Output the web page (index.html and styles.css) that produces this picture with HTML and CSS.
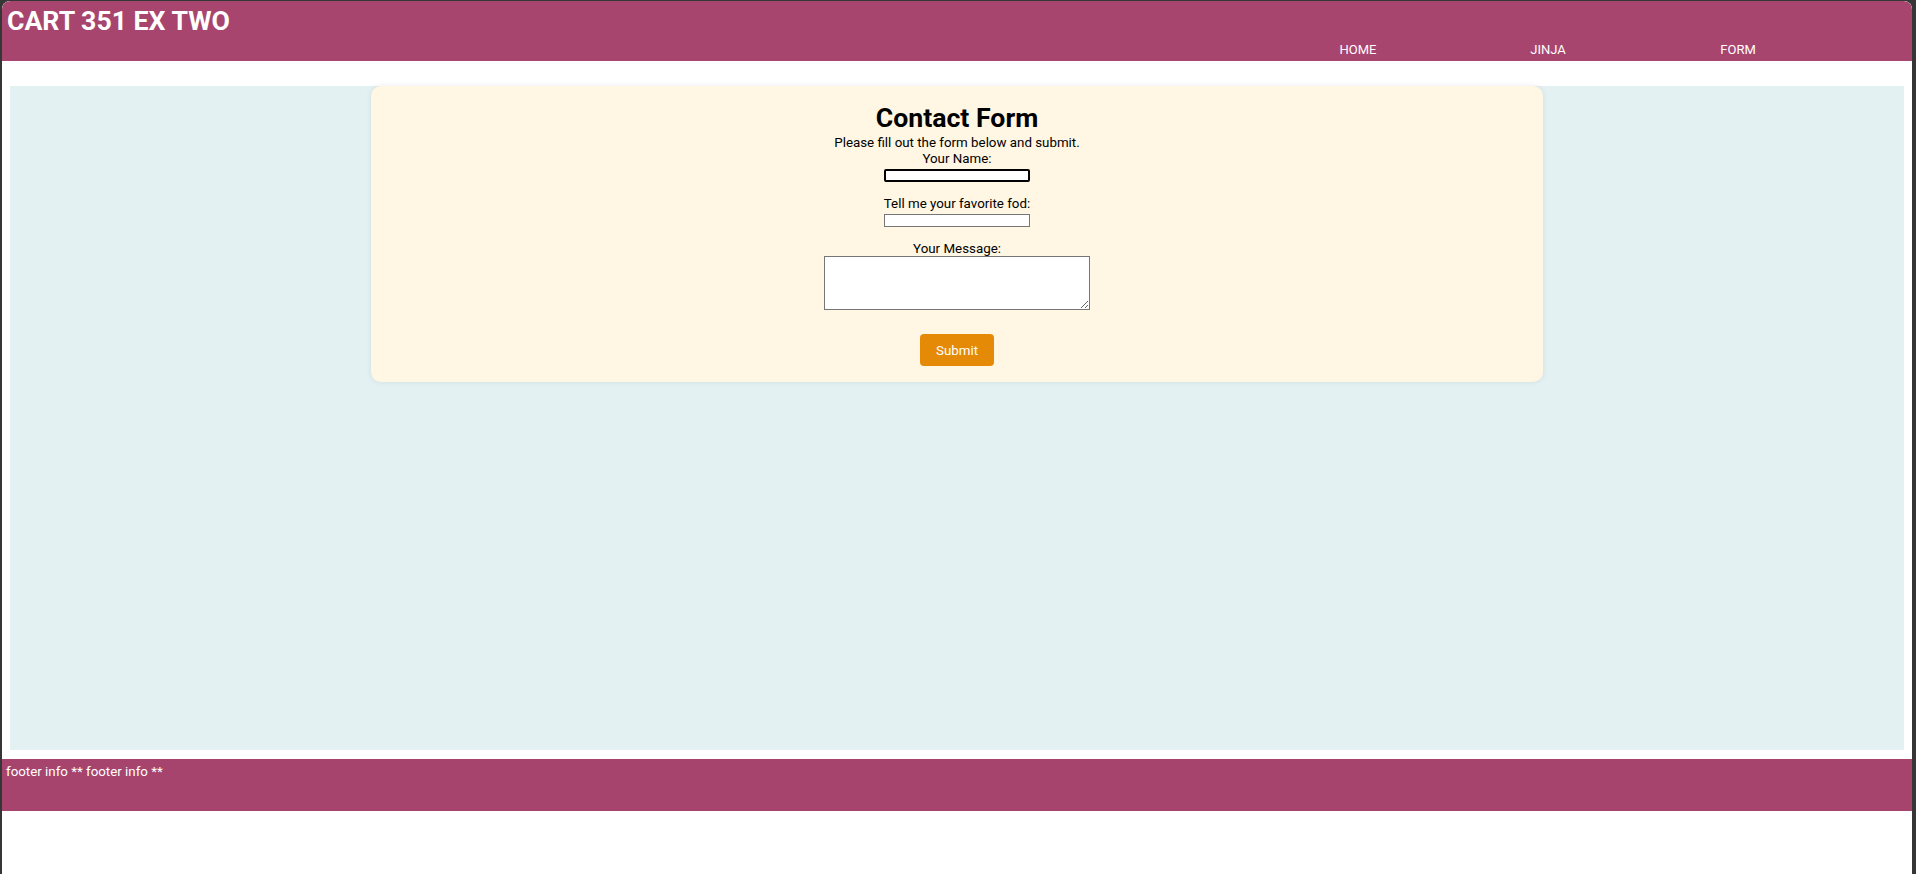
FILE: index.html
```html
<!DOCTYPE html>
<html lang="en">
<head>
<meta charset="utf-8">
<title>CART 351 EX TWO</title>
<link rel="stylesheet" href="styles.css">
</head>
<body>
<div class="window">
  <header class="site-header">
    <h1 class="site-title">CART 351 EX TWO</h1>
    <nav class="site-nav">
      <a class="nav-link" href="#">HOME</a>
      <a class="nav-link" href="#">JINJA</a>
      <a class="nav-link" href="#">FORM</a>
    </nav>
  </header>
  <main class="content">
    <section class="card">
      <h2 class="card-title">Contact Form</h2>
      <p class="card-intro">Please fill out the form below and submit.</p>
      <form class="contact-form">
        <div class="field">
          <label class="field-label" for="name">Your Name:</label>
          <input class="field-input focused" id="name" type="text">
        </div>
        <div class="field">
          <label class="field-label" for="food">Tell me your favorite fod:</label>
          <input class="field-input" id="food" type="text">
        </div>
        <div class="field">
          <label class="field-label" for="msg">Your Message:</label>
          <textarea class="field-textarea" id="msg"></textarea>
        </div>
        <button class="submit-btn" type="button">Submit</button>
      </form>
    </section>
  </main>
  <footer class="site-footer">footer info ** footer info **</footer>
</div>
</body>
</html>
```
FILE: styles.css
```css
html, body {
  margin: 0;
  padding: 0;
}
body {
  background: #363636;
  font-family: Roboto, "Liberation Sans", sans-serif;
  height: 874px;
  overflow: hidden;
}
.window {
  margin: 1px 4px 0 2px;
  background: #ffffff;
  border-radius: 8px 8px 0 0;
  height: 873px;
  overflow: hidden;
}
.site-header {
  background: #a8456e;
  height: 60px;
  display: flex;
  justify-content: space-between;
  align-items: flex-start;
  border-radius: 8px 8px 0 0;
}
.site-title {
  margin: 0;
  padding: 5px 0 0 5px;
  font-size: 26.67px;
  line-height: 30px;
  font-weight: 700;
  color: #ffffff;
}
.site-nav {
  display: flex;
  margin: 41px 79px 0 0;
}
.nav-link {
  width: 190px;
  text-align: center;
  color: #ffffff;
  text-decoration: none;
  font-size: 13px;
  line-height: 15px;
}
.content {
  margin: 25px 8px 9px;
  background: #e3f1f2;
  height: 664px;
}
.card {
  width: 1172px;
  margin: 0 auto;
  background: #fff6e4;
  border-radius: 10px;
  box-shadow: 0 0 6px rgba(0, 0, 0, 0.08);
  padding: 16px 0 16px;
  display: flex;
  flex-direction: column;
  align-items: center;
  color: #000000;
}
.card-title {
  margin: 0;
  font-size: 26.67px;
  line-height: 33px;
  font-weight: 700;
}
.card-intro {
  margin: 0;
  font-size: 13.33px;
  line-height: 16px;
}
.contact-form {
  display: flex;
  flex-direction: column;
  align-items: center;
}
.field {
  display: flex;
  flex-direction: column;
  align-items: center;
  margin-bottom: 14px;
}
.field:last-of-type {
  margin-bottom: 0;
}
.field-label {
  font-size: 13.33px;
  line-height: 16px;
  margin-bottom: 2px;
}
.field-input {
  box-sizing: border-box;
  width: 146px;
  height: 13px;
  padding: 0;
  border: 1px solid #767676;
  background: #ffffff;
  margin: 0;
}
.field-input.focused {
  border: 2px solid #000000;
  border-radius: 2px;
}
.field-textarea {
  box-sizing: border-box;
  width: 266px;
  height: 54px;
  margin: -3px 0 0;
  padding: 0;
  border: 1px solid #767676;
  background: #ffffff;
  resize: both;
}
.submit-btn {
  margin-top: 24px;
  width: 74px;
  height: 32px;
  border: none;
  border-radius: 4px;
  background: #e48a06;
  color: #ffffff;
  font-family: Roboto, "Liberation Sans", sans-serif;
  font-size: 13.33px;
  font-weight: 400;
  padding: 0;
}
.site-footer {
  background: #a6446d;
  color: #ffffff;
  height: 52px;
  box-sizing: border-box;
  padding: 5px 0 0 4px;
  font-size: 13.33px;
  line-height: 16px;
}
```
